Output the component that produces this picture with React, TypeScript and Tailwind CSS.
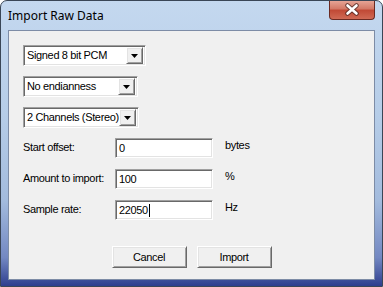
import React from "react";

const sunken =
  "border border-t-[#a0a0a0] border-l-[#a0a0a0] border-b-white border-r-white shadow-[inset_1px_1px_0_#696969,inset_-1px_-1px_0_#e3e3e3]";
const raised =
  "border border-t-white border-l-white border-b-[#696969] border-r-[#696969] shadow-[inset_1px_1px_0_#e3e3e3,inset_-1px_-1px_0_#a0a0a0]";

function Combo({ text, width }: { text: string; width: string }) {
  return (
    <div className={`${sunken} ${width} h-[21px] bg-white flex items-center p-[1px] box-border`}>
      <span className="flex-1 pl-[2px] whitespace-nowrap leading-none">{text}</span>
      <div className={`${raised} w-[17px] h-[17px] shrink-0 bg-[#f0f0f0] flex items-center justify-center box-border mr-[1px]`}>
        <svg width="7" height="4" viewBox="0 0 7 4">
          <polygon points="0,0 7,0 3.5,4" fill="#000" />
        </svg>
      </div>
    </div>
  );
}

function Field({ label, value, unit, caret }: { label: string; value: string; unit: string; caret?: boolean }) {
  return (
    <div className="flex items-center h-[20px]">
      <div className="w-[92px] whitespace-nowrap -mt-[2px]">{label}</div>
      <div className={`${sunken} w-[98px] h-[20px] bg-white flex items-center pl-[3px] box-border`}>
        <span className="leading-none">{value}</span>
        {caret && <span className="w-[1px] h-[13px] bg-black ml-[1px]" />}
      </div>
      <div className="ml-[12px] -mt-[6px]">{unit}</div>
    </div>
  );
}

function Button({ label }: { label: string }) {
  return (
    <div className={`${raised} w-[75px] h-[22px] bg-[#f0f0f0] flex items-center justify-center box-border`}>
      {label}
    </div>
  );
}

export default function App() {
  return (
    <div className="w-[383px] h-[287px] box-border border border-[#3a4656] rounded-t-[7px] flex flex-col px-[7px] pb-[6px] bg-[linear-gradient(to_bottom,#c4d8ef_0%,#b6cde8_40%,#a3bbdd_70%,#7388c2_90%,#2e3e8e_100%)] overflow-hidden">
      <div className="h-[29px] flex items-start relative shrink-0">
        <div className="mt-[6px] text-[12px] text-black" style={{ fontFamily: '"Noto Sans", "Open Sans", sans-serif' }}>
          Import Raw Data
        </div>
        <div className="absolute right-0 top-[-1px] w-[46px] h-[20px] rounded-b-[4px] border border-[#6b2a22] border-t-0 bg-[linear-gradient(to_bottom,#e9a99b_0%,#d47a68_45%,#c14a36_55%,#d06a55_100%)] flex items-center justify-center">
          <svg width="16" height="13" viewBox="0 0 16 13">
            <path d="M3.5 2.5 L12.5 10.5 M12.5 2.5 L3.5 10.5" stroke="#4a2420" strokeWidth="4.5" strokeLinecap="round" opacity="0.75" />
            <path d="M3.5 2.5 L12.5 10.5 M12.5 2.5 L3.5 10.5" stroke="#ffffff" strokeWidth="2.6" strokeLinecap="round" />
          </svg>
        </div>
      </div>
      <div
        className="flex-1 border border-[#7d8ca6] bg-[#f0f0f0] pl-[14px] pt-[14px] flex flex-col text-[11px] tracking-[-0.35px] text-black"
        style={{ fontFamily: '"Liberation Sans", Arial, sans-serif' }}
      >
        <div className="flex flex-col gap-[10px]">
          <Combo text="Signed 8 bit PCM" width="w-[123px]" />
          <Combo text="No endianness" width="w-[115px]" />
          <Combo text="2 Channels (Stereo)" width="w-[116px]" />
        </div>
        <div className="flex flex-col gap-[11px] mt-[10px]">
          <Field label="Start offset:" value="0" unit="bytes" />
          <Field label="Amount to import:" value="100" unit="%" />
          <Field label="Sample rate:" value="22050" unit="Hz" caret />
        </div>
        <div className="flex gap-[10px] justify-center mt-[26px] pr-[14px]">
          <Button label="Cancel" />
          <Button label="Import" />
        </div>
      </div>
    </div>
  );
}
